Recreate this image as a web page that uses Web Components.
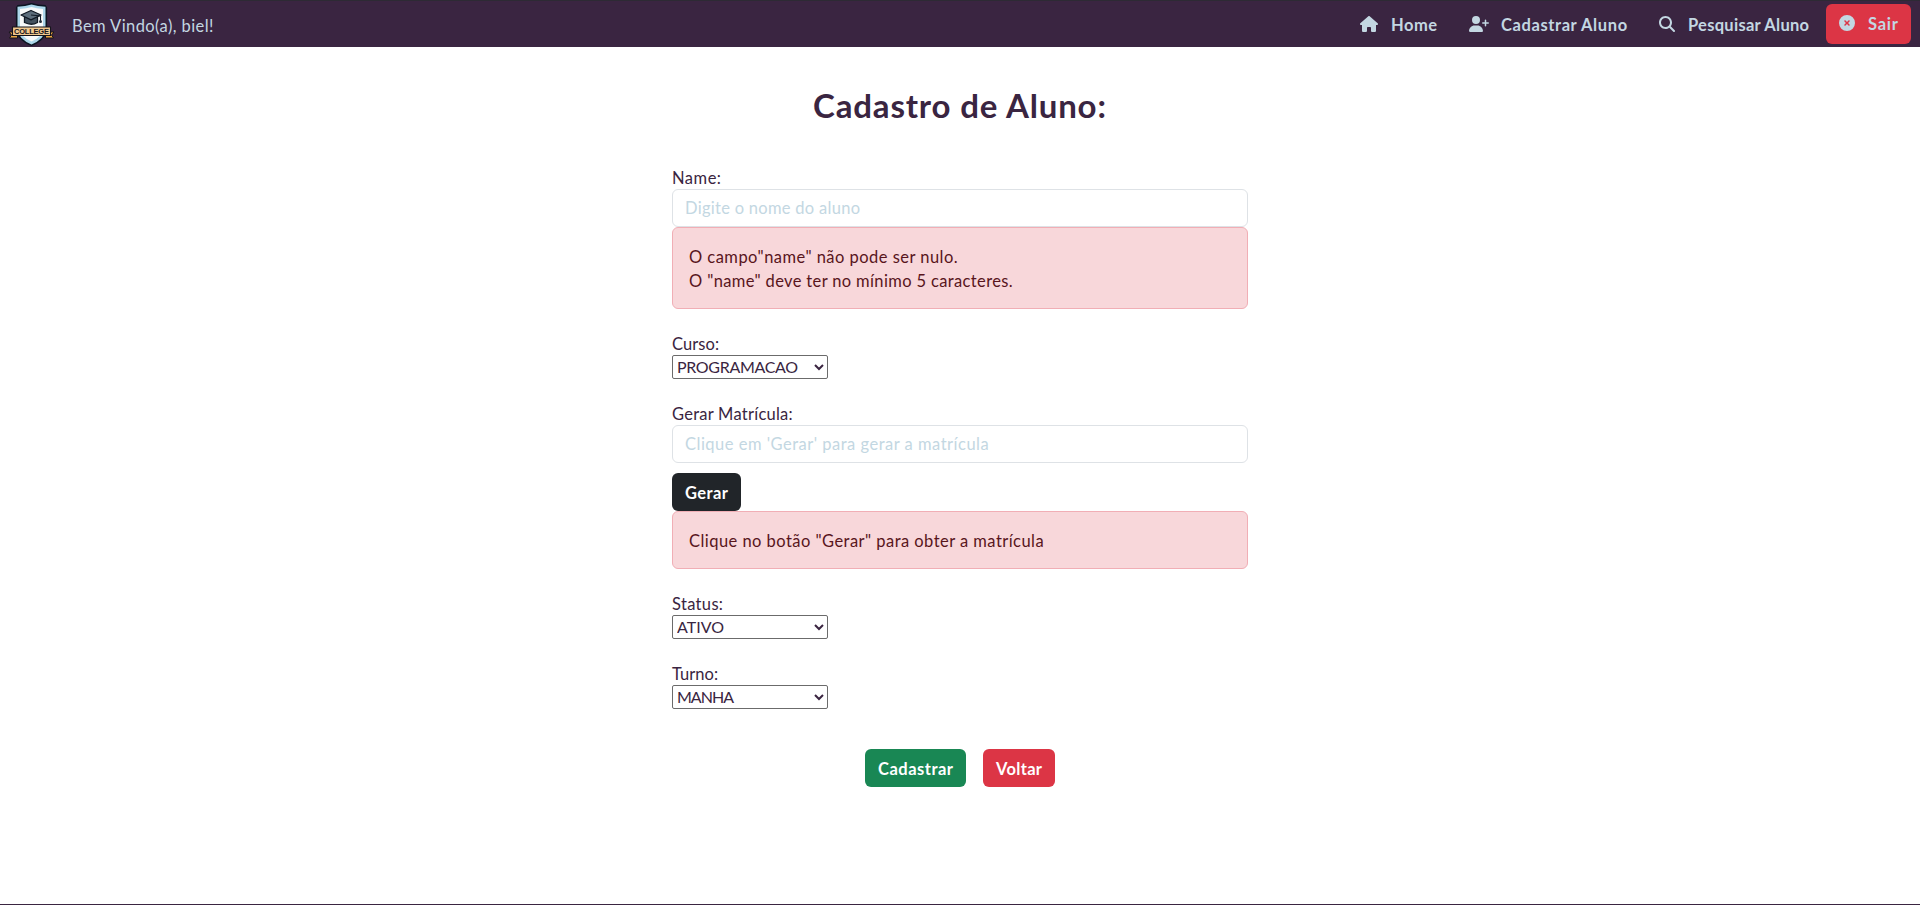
<!DOCTYPE html>
<html lang="pt-BR">
<head>
<meta charset="utf-8">
<title>Cadastro de Aluno</title>
<style>
html,body{margin:0;height:100%;background:#fff}
body{font:16.5px/24px Lato,"Noto Sans",sans-serif;color:#3a2541}
</style>
</head>
<body>
<student-page></student-page>
<script>
// Letter spacing that gives a line the advance width the layout expects.
const ctx = document.createElement('canvas').getContext('2d');
function spacing(text, width, weight = 400, size = 16.5) {
  ctx.font = `${weight} ${size}px Lato, "Noto Sans", sans-serif`;
  return ((width - ctx.measureText(text).width) / Math.max(1, text.length - 1)).toFixed(3) + 'px';
}
function define(name, html, setup) {
  const t = document.createElement('template');
  t.innerHTML = html;
  customElements.define(name, class extends HTMLElement {
    constructor() {
      super();
      this.attachShadow({ mode: 'open' }).append(t.content.cloneNode(true));
    }
    connectedCallback() { if (setup) setup(this, this.shadowRoot); }
  });
}

define('ui-text', `<style>:host{display:inline-block;white-space:nowrap}span{display:block;padding-top:1px;margin-bottom:-1px}</style><span></span>`, (h, r) => {
  const s = r.querySelector('span'), w = +h.getAttribute('w');
  const weight = h.getAttribute('weight') || 400, size = h.getAttribute('size') || 16.5;
  s.textContent = h.getAttribute('text');
  s.style.fontWeight = weight;
  s.style.fontSize = size + 'px';
  s.style.letterSpacing = spacing(s.textContent, w, weight, size);
  h.style.width = w + 'px';
});

const ICONS = {
  house: [576, 'M575.8 255.5c0 18-15 32.1-32 32.1h-32l.7 160.2c0 2.7-.2 5.4-.5 8.1V472c0 22.1-17.9 40-40 40H456c-1.1 0-2.2 0-3.3-.1c-1.4 .1-2.8 .1-4.2 .1H416 392c-22.1 0-40-17.9-40-40V448 384c0-17.7-14.3-32-32-32H256c-17.7 0-32 14.3-32 32v64 24c0 22.1-17.9 40-40 40H160 128.1c-1.5 0-3-.1-4.5-.2c-1.2 .1-2.4 .2-3.6 .2H104c-22.1 0-40-17.9-40-40V360c0-.9 0-1.9 .1-2.8V287.6H32c-18 0-32-14-32-32.1c0-9 3-17 10-24L266.4 8c7-7 15-8 22-8s15 2 21 7L564.8 231.5c8 7 12 15 11 24z'],
  userplus: [640, 'M96 128a128 128 0 1 1 256 0A128 128 0 1 1 96 128zM0 482.3C0 383.8 79.8 304 178.3 304h91.4C368.2 304 448 383.8 448 482.3c0 16.4-13.3 29.7-29.7 29.7H29.7C13.3 512 0 498.7 0 482.3zM504 312V248H440c-13.3 0-24-10.7-24-24s10.7-24 24-24h64V136c0-13.3 10.7-24 24-24s24 10.7 24 24v64h64c13.3 0 24 10.7 24 24s-10.7 24-24 24H552v64c0 13.3-10.7 24-24 24s-24-10.7-24-24z'],
  search: [512, 'M416 208c0 45.9-14.9 88.3-40 122.7L502.6 457.4c12.5 12.5 12.5 32.8 0 45.3s-32.8 12.5-45.3 0L330.7 376c-34.4 25.2-76.8 40-122.7 40C93.1 416 0 322.9 0 208S93.1 0 208 0S416 93.1 416 208zM208 352a144 144 0 1 0 0-288 144 144 0 1 0 0 288z'],
  xmark: [512, 'M256 512A256 256 0 1 0 256 0a256 256 0 1 0 0 512zM175 175c9.4-9.4 24.6-9.4 33.9 0l47 47 47-47c9.4-9.4 24.6-9.4 33.9 0s9.4 24.6 0 33.9l-47 47 47 47c9.4 9.4 9.4 24.6 0 33.9s-24.6 9.4-33.9 0l-47-47-47 47c-9.4 9.4-24.6 9.4-33.9 0s-9.4-24.6 0-33.9l47-47-47-47c-9.4-9.4-9.4-24.6 0-33.9z']
};
define('ui-icon', `<style>:host{display:block;flex:none}svg{display:block;height:16px;fill:currentColor}</style><svg><path/></svg>`, (h, r) => {
  const icon = ICONS[h.getAttribute('name')];
  if (!icon) return;
  const s = r.querySelector('svg');
  s.setAttribute('viewBox', `0 0 ${icon[0]} 512`);
  s.style.width = icon[0] / 32 + 'px';
  r.querySelector('path').setAttribute('d', icon[1]);
});

define('college-logo', `<style>:host{display:block;width:48px;height:44px}svg{display:block}</style>
<svg width="48" height="44" viewBox="8.500 2.500 48 44">
  <path d="M18 4.500Q26 4.500 32 2.300Q38 4.500 46 4.500L47.600 7V29Q47 39.500 32 45.500Q17 39.500 16.400 29V7Z" fill="#0c1522"/>
  <path d="M18 6.200Q26 5.800 32 3.900Q38 5.800 46 6.200V29Q45 38.500 32 44Q19 38.500 18 29Z" fill="#acd7ea"/>
  <path d="M20.500 8.500Q27 8.200 32 6.600Q37 8.200 43.500 8.500V29Q42.500 36.500 32 41Q21.500 36.500 20.500 29Z" fill="#f8fafa"/>
  <path d="M25 16.500V22Q32 25.500 38 22V16.500Z" fill="#43515e" stroke="#111a25" stroke-width="1.300"/>
  <path d="M21.500 14.500L31.500 10L41.500 14.500L31.500 19.300Z" fill="#5d6e7c" stroke="#111a25" stroke-width="1.300" stroke-linejoin="round"/>
  <path d="M31.500 14.500L41 15.500V21" fill="none" stroke="#111a25" stroke-width="1.100"/>
  <circle cx="41" cy="21" r="1.500" fill="#26323d"/>
  <path d="M9.500 31.500H18V37.500H10L12 34.500ZM54.500 31.500H46V37.500H54L52 34.500Z" fill="#eda743" stroke="#15151b" stroke-width="1"/>
  <path d="M13 26.500H51V35H13Z" fill="#f0c88e" stroke="#15151b" stroke-width="1.100"/>
  <text x="14.500" y="33.500" textLength="35" lengthAdjust="spacing" font-family="Liberation Sans" font-size="7.500" font-weight="700" fill="#15151b">COLLEGE</text>
</svg>`);

define('nav-link', `<style>
:host{display:flex;align-items:center;height:24px;color:#c3d7e2}
a{display:flex;align-items:center;gap:var(--gap,12px);color:inherit;text-decoration:none}
:host([danger]){box-sizing:border-box;width:85px;height:40px;padding:0 0 2px 13px;background:#dc3545;border-radius:6px}
</style><a><ui-icon></ui-icon><slot></slot></a>`, (h, r) => {
  const i = r.querySelector('ui-icon');
  i.setAttribute('name', h.getAttribute('icon'));
  i.connectedCallback();
});

define('top-bar', `<style>
:host{display:flex;align-items:center;box-sizing:border-box;height:47px;padding:1px 9px 0 8px;background:#3a2541;border-top:1px solid #2d2a34;color:#c3d7e2}
college-logo{margin:0 16px 0 0}
nav{margin-left:auto;display:flex;align-items:center;padding-bottom:1px}
</style>
<college-logo></college-logo><ui-text text="Bem Vindo(a), biel!" w="142"></ui-text>
<nav><slot></slot></nav>`);

define('form-alert', `<style>
:host{display:block;box-sizing:border-box;padding:16px;background:#f8d7da;border:1px solid #f1aeb5;border-radius:6px;color:#58151c}
::slotted(*){display:block}
</style><slot></slot>`);

define('form-field', `<style>
:host{display:block}
label{display:block;height:24px}
</style><label><ui-text></ui-text></label><slot></slot>`, (h, r) => {
  const t = r.querySelector('ui-text');
  t.setAttribute('text', h.getAttribute('label'));
  t.setAttribute('w', h.getAttribute('lw'));
  t.connectedCallback();
});

define('text-input', `<style>
:host{display:block}
input{display:block;box-sizing:border-box;width:100%;height:38px;margin:0;padding:6px 12px;font:inherit;color:inherit;background:#fff;border:1px solid #dee2e6;border-radius:6px}
input::placeholder{color:#c3d7e2;opacity:1}
</style><input type="text">`, (h, r) => {
  const i = r.querySelector('input');
  i.placeholder = h.getAttribute('placeholder');
  i.style.letterSpacing = spacing(i.placeholder, +h.getAttribute('w'));
});

define('select-box', `<style>
:host{display:block;width:156px;height:24px}
select{display:block;box-sizing:border-box;width:156px;height:24px;margin:0;padding:0 0 1px;font:inherit;color:inherit;background:#fff;border:1px solid #6b6b6b;border-radius:2px}
</style><select><option></option></select>`, (h, r) => {
  const s = r.querySelector('select'), o = r.querySelector('option');
  o.textContent = h.getAttribute('value');
  s.style.fontSize = '16px';
  s.style.letterSpacing = spacing(o.textContent, +h.getAttribute('w'), 400, 16);
});

define('action-button', `<style>
:host{display:block}
button{display:block;box-sizing:border-box;height:38px;padding:0 13px;border:0;border-radius:6px;font:inherit;line-height:24px;color:#fff;background:#212529}
:host([kind=success]) button{background:#198754}
:host([kind=danger]) button{background:#dc3545}
</style><button type="button"><slot></slot></button>`);

define('student-page', `<style>
:host{display:flex;flex-direction:column;box-sizing:border-box;height:100vh;overflow:hidden;border-bottom:1px solid #3a2541}
main{width:576px;margin:0 auto}
h1{margin:37px 0 41px;height:40px;line-height:40px;display:flex;justify-content:center}
.gen{margin-top:10px}
.actions{display:flex;justify-content:center;gap:17px;margin-top:40px}
form{display:flex;flex-direction:column;gap:22px}
</style>
<top-bar>
  <nav-link icon="house" style="--gap:13px"><ui-text text="Home" w="46" weight="700"></ui-text></nav-link>
  <nav-link icon="userplus" style="margin-left:32px"><ui-text text="Cadastrar Aluno" w="127" weight="700"></ui-text></nav-link>
  <nav-link icon="search" style="margin-left:31px;--gap:13px"><ui-text text="Pesquisar Aluno" w="122" weight="700"></ui-text></nav-link>
  <nav-link icon="xmark" danger style="margin-left:16px;--gap:13px"><ui-text text="Sair" w="30" weight="700"></ui-text></nav-link>
</top-bar>
<main>
  <h1><ui-text text="Cadastro de Aluno:" w="294" weight="700" size="33"></ui-text></h1>
  <form>
    <form-field label="Name:" lw="49">
      <text-input placeholder="Digite o nome do aluno" w="175"></text-input>
      <form-alert><ui-text text='O campo"name" não pode ser nulo.' w="269"></ui-text><ui-text text='O "name" deve ter no mínimo 5 caracteres.' w="324"></ui-text></form-alert>
    </form-field>
    <form-field label="Curso:" lw="47"><select-box value="PROGRAMACAO" w="121"></select-box></form-field>
    <form-field label="Gerar Matrícula:" lw="121">
      <text-input placeholder="Clique em 'Gerar' para gerar a matrícula" w="304"></text-input>
      <action-button class="gen"><ui-text text="Gerar" w="43" weight="700"></ui-text></action-button>
      <form-alert><ui-text text='Clique no botão "Gerar" para obter a matrícula' w="355"></ui-text></form-alert>
    </form-field>
    <form-field label="Status:" lw="51"><select-box value="ATIVO" w="47"></select-box></form-field>
    <form-field label="Turno:" lw="46"><select-box value="MANHA" w="57"></select-box></form-field>
  </form>
  <div class="actions">
    <action-button kind="success"><ui-text text="Cadastrar" w="75" weight="700"></ui-text></action-button>
    <action-button kind="danger"><ui-text text="Voltar" w="46" weight="700"></ui-text></action-button>
  </div>
</main>`);
</script>
</body>
</html>
